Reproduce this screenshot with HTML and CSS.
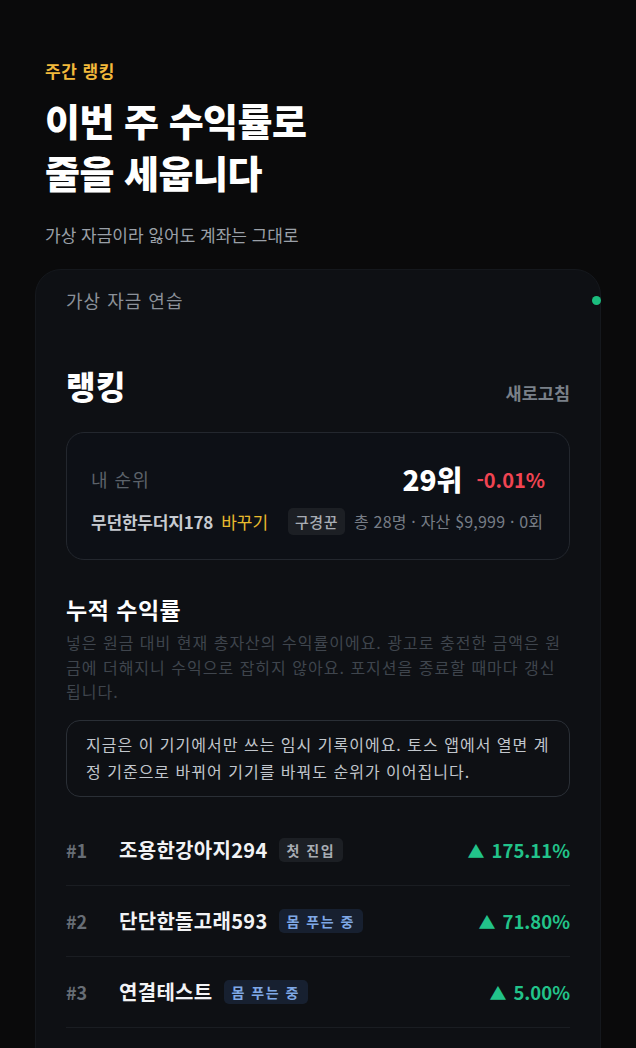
FILE: index.html
```html
<!DOCTYPE html>
<html lang="ko">
<head>
<meta charset="utf-8">
<link rel="stylesheet" href="styles.css">
</head>
<body>
<header class="hero">
  <div class="eyebrow">주간 랭킹</div>
  <h1 class="title">이번 주 수익률로<br>줄을 세웁니다</h1>
  <p class="subtitle">가상 자금이라 잃어도 계좌는 그대로</p>
</header>
<section class="card">
  <span class="live-dot"></span>
  <div class="card-label">가상 자금 연습</div>
  <div class="card-head">
    <h2 class="card-title">랭킹</h2>
    <span class="refresh">새로고침</span>
  </div>
  <div class="mine">
    <div class="mine-top">
      <span class="mine-label">내 순위</span>
      <span class="mine-rank">29위</span>
      <span class="mine-rate">-0.01%</span>
    </div>
    <div class="mine-bottom">
      <span class="mine-name">무던한두더지178</span>
      <span class="mine-change">바꾸기</span>
      <span class="badge badge-gray">구경꾼</span>
      <span class="mine-meta">총 28명 · 자산 $9,999 · 0회</span>
    </div>
  </div>
  <h3 class="sec-title">누적 수익률</h3>
  <p class="sec-desc">넣은 원금 대비 현재 총자산의 수익률이에요. 광고로 충전한 금액은 원금에 더해지니 수익으로 잡히지 않아요. 포지션을 종료할 때마다 갱신됩니다.</p>
  <div class="notice">지금은 이 기기에서만 쓰는 임시 기록이에요. 토스 앱에서 열면 계정 기준으로 바뀌어 기기를 바꿔도 순위가 이어집니다.</div>
  <ul class="list">
    <li class="row">
      <span class="pos">#1</span>
      <span class="name">조용한강아지294</span>
      <span class="badge badge-gray">첫 진입</span>
      <span class="rate"><span class="tri">▲</span>175.11%</span>
    </li>
    <li class="row">
      <span class="pos">#2</span>
      <span class="name">단단한돌고래593</span>
      <span class="badge badge-blue">몸 푸는 중</span>
      <span class="rate"><span class="tri">▲</span>71.80%</span>
    </li>
    <li class="row">
      <span class="pos">#3</span>
      <span class="name">연결테스트</span>
      <span class="badge badge-blue">몸 푸는 중</span>
      <span class="rate"><span class="tri">▲</span>5.00%</span>
    </li>
  </ul>
</section>
</body>
</html>
```
FILE: styles.css
```css
* { box-sizing: border-box; }
html, body { margin: 0; padding: 0; }
body {
  background: #0a0a0b;
  color: #fff;
  font-family: "Noto Sans CJK KR", "Noto Sans", sans-serif;
  width: 636px;
  height: 1048px;
  overflow: hidden;
}
.hero { padding: 58px 45px 0; }
.eyebrow {
  color: #f2b93b;
  font-size: 17px;
  font-weight: 700;
  line-height: 26px;
  letter-spacing: 0.5px;
}
.title {
  margin: 10px 0 0;
  font-size: 38px;
  font-weight: 900;
  line-height: 52px;
  letter-spacing: -0.5px;
  color: #fff;
}
.subtitle {
  margin: 25px 0 0;
  font-size: 17px;
  line-height: 24px;
  color: #9aa0a8;
}
.card {
  position: relative;
  margin: 22px 35px 0 35px;
  width: 566px;
  background: #0e1014;
  border: 1px solid #15181d;
  border-radius: 26px;
  padding: 18px 30px 0 30px;
  height: 900px;
}
.live-dot {
  position: absolute;
  right: -1px;
  top: 26px;
  width: 9px;
  height: 9px;
  border-radius: 50%;
  background: #1bbd7e;
}
.card-label {
  font-size: 18px;
  line-height: 24px;
  color: #8b9199;
  letter-spacing: 1px;
}
.card-head {
  margin-top: 51px;
  display: flex;
  justify-content: space-between;
  align-items: center;
  height: 44px;
}
.card-title {
  margin: 0;
  font-size: 32px;
  font-weight: 900;
  color: #fff;
  letter-spacing: 0.5px;
}
.refresh {
  font-size: 17.5px;
  font-weight: 700;
  color: #7a8089;
  padding-top: 14px;
}
.mine {
  margin-top: 25px;
  border: 1px solid #23272e;
  border-radius: 18px;
  background: #0d1016;
  padding: 26px 24px 24px 24px;
}
.mine-top {
  display: flex;
  align-items: center;
  height: 40px;
}
.mine-label {
  font-size: 18px;
  color: #5c626a;
  margin-right: auto;
  letter-spacing: 1px;
}
.mine-rank {
  font-size: 28px;
  font-weight: 900;
  color: #fff;
}
.mine-rate {
  margin-left: 14px;
  font-size: 20px;
  font-weight: 700;
  color: #f04452;
}
.mine-bottom {
  display: flex;
  align-items: center;
  margin-top: 8px;
  height: 28px;
  font-size: 17px;
  white-space: nowrap;
}
.mine-bottom > * { flex-shrink: 0; }
.mine-name { font-weight: 700; color: #c6cad0; letter-spacing: -0.2px; }
.mine-change { color: #e8bb2e; margin-left: 8px; }
.mine-bottom .badge { margin-left: 20px; font-size: 15px; padding: 0 7px; height: 27px; line-height: 27px; letter-spacing: 0.5px; font-weight: 500; }
.mine-meta { color: #777d86; margin-left: 9px; font-size: 16px; letter-spacing: 0.2px; }
.badge {
  display: inline-block;
  border-radius: 5px;
  font-size: 14px;
  font-weight: 600;
  height: 24px;
  line-height: 24px;
  padding: 0 8px;
  letter-spacing: 1.5px;
  white-space: nowrap;
}
.badge-gray { background: #1c1f24; color: #a7acb3; }
.badge-blue { background: #172030; color: #7fa8e6; }
.sec-title {
  margin: 33px 0 0;
  font-size: 23px;
  font-weight: 700;
  line-height: 32px;
  color: #fff;
  letter-spacing: 0.5px;
}
.sec-desc {
  margin: 5px 0 0;
  font-size: 16px;
  line-height: 24.5px;
  color: #3f454d;
  letter-spacing: 1px;
}
.notice {
  margin-top: 16px;
  border: 1px solid #2a2f36;
  border-radius: 14px;
  padding: 10.5px 19px;
  font-size: 16px;
  line-height: 27px;
  color: #c1c6cc;
  letter-spacing: 1px;
}
.list {
  list-style: none;
  margin: 18px 0 0;
  padding: 0;
}
.row {
  display: flex;
  align-items: center;
  height: 71px;
  border-bottom: 1px solid #1a1d22;
}
.pos {
  width: 53px;
  font-size: 18px;
  font-weight: 600;
  color: #676d75;
}
.name {
  font-size: 20px;
  font-weight: 700;
  color: #f2f3f5;
  letter-spacing: 0.3px;
}
.row .badge { margin-left: 11px; }
.rate {
  margin-left: auto;
  font-size: 18.5px;
  font-weight: 600;
  color: #22c38a;
  white-space: nowrap;
}
.tri { font-size: 17px; margin-right: 7px; }
```
